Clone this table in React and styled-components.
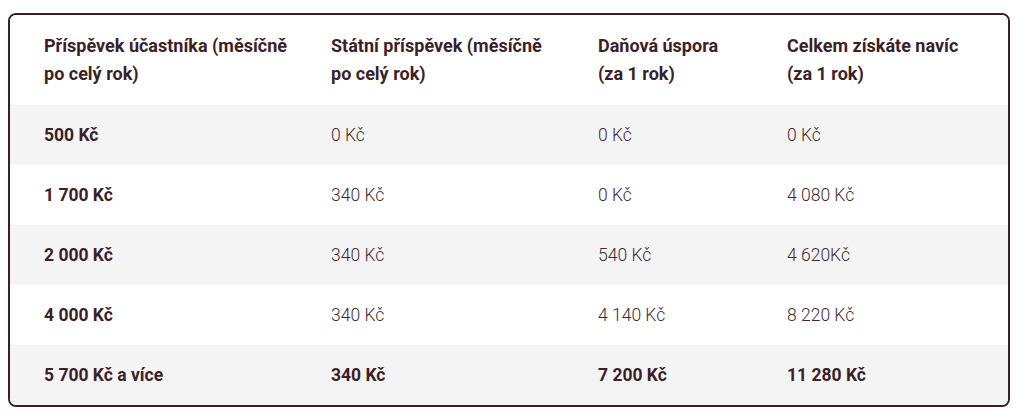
import React from "react";
import styled, { createGlobalStyle } from "styled-components";

const Global = createGlobalStyle`
  body {
    margin: 8px;
    background: #ffffff;
    font-family: Roboto, "Open Sans", sans-serif;
  }
`;

const Card = styled.div`
  margin-top: 5px;
  border: 2px solid #3a1f28;
  border-radius: 8px;
  overflow: hidden;
  background: #fff;
`;

const Row = styled.div`
  display: grid;
  grid-template-columns: 287px 267px 189px 1fr;
  align-items: center;
  padding: 0 34px;
  height: ${(p) => (p.$header ? "90px" : "60px")};
  background: ${(p) => (p.$shaded ? "#f4f4f4" : "#ffffff")};
  box-sizing: border-box;
`;

const HeadCell = styled.div`
  font-size: 18px;
  font-weight: 700;
  line-height: 28px;
  color: #3b1f29;
  white-space: nowrap;
`;

const Cell = styled.div`
  font-size: 17.5px;
  line-height: 22px;
  font-weight: ${(p) => (p.$bold ? 700 : 300)};
  color: ${(p) => (p.$bold ? "#3b1f29" : "#3d2a31")};
`;

const headers = [
  ["Příspěvek účastníka (měsíčně", "po celý rok)"],
  ["Státní příspěvek (měsíčně", "po celý rok)"],
  ["Daňová úspora", "(za 1 rok)"],
  ["Celkem získáte navíc", "(za 1 rok)"],
];

const rows = [
  ["500 Kč", "0 Kč", "0 Kč", "0 Kč"],
  ["1 700 Kč", "340 Kč", "0 Kč", "4 080 Kč"],
  ["2 000 Kč", "340 Kč", "540 Kč", "4 620Kč"],
  ["4 000 Kč", "340 Kč", "4 140 Kč", "8 220 Kč"],
  ["5 700 Kč a více", "340 Kč", "7 200 Kč", "11 280 Kč"],
];

export default function App() {
  return (
    <>
      <Global />
      <Card>
        <Row $header>
          {headers.map(([a, b]) => (
            <HeadCell key={a}>
              {a}
              <br />
              {b}
            </HeadCell>
          ))}
        </Row>
        {rows.map((r, i) => {
          const last = i === rows.length - 1;
          return (
            <Row key={i} $shaded={i % 2 === 0}>
              {r.map((v, j) => (
                <Cell key={j} $bold={j === 0 || last}>
                  {v}
                </Cell>
              ))}
            </Row>
          );
        })}
      </Card>
    </>
  );
}
